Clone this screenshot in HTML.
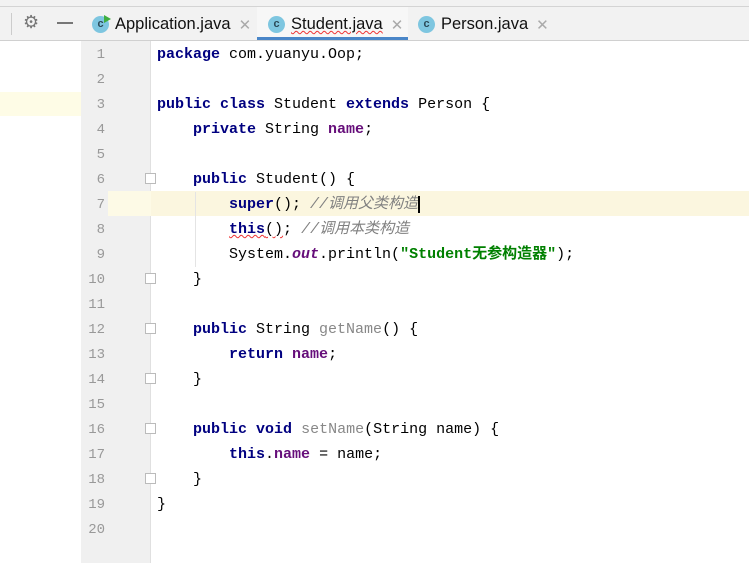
<!DOCTYPE html>
<html><head><meta charset="utf-8"><style>
body{margin:0;width:749px;height:563px;overflow:hidden;background:#fff;position:relative;font-family:"Liberation Sans","Noto Sans CJK SC",sans-serif}
.a{position:absolute}
.top{left:0;top:0;width:749px;height:6px;background:#f2f2f2;border-bottom:1px solid #d4d4d4}
.bar{left:0;top:7px;width:749px;height:33px;background:#f2f2f2;border-bottom:1px solid #d0d0d0}
.tab{top:8px;height:33px;font-size:16.5px;color:#111;display:flex;align-items:center}
.ic{display:inline-block;width:17px;height:17px;border-radius:50%;background:#7ec6e0;color:#2c4a58;font-size:11px;line-height:17px;text-align:center;margin-right:6px;font-weight:bold;flex:none}
.x{color:#aaa;font-size:15px;margin-left:8px}
.gut{left:81px;top:41px;width:69px;height:522px;background:#f0f0f0;border-right:1px solid #e0e0e0}
.ln{left:81px;width:24px;text-align:right;font:14px "Liberation Mono",monospace;color:#999;line-height:25px}
.code{left:157px;top:42px;font:15px "Liberation Mono","Noto Sans CJK SC",monospace;line-height:25px;color:#000;white-space:pre}
.k{color:#000080;font-weight:bold}
.f{color:#660e7a;font-weight:bold}
.c{color:#808080;font-style:italic}
.s{color:#008000;font-weight:bold}
.g{color:#888}
.fold{width:9px;height:9px;border:1px solid #bbb;background:#fff;left:145px}
</style></head><body>
<div class="a top"></div>
<div class="a bar"></div>
<div class="a" style="left:11px;top:13px;width:1px;height:22px;background:#ccc"></div>
<div class="a" style="left:23px;top:12px;font-size:18px;color:#777">⚙</div>
<div class="a" style="left:57px;top:22px;width:16px;height:2px;background:#777"></div>
<div class="a tab" style="left:92px"><span class="ic">c</span>Application.java<span class="x">✕</span></div>
<div class="a" style="left:104px;top:15px;width:0;height:0;border-left:7px solid #3fae3f;border-top:4px solid transparent;border-bottom:4px solid transparent"></div>
<div class="a" style="left:257px;top:7px;width:151px;height:33px;background:#f7f7f7"></div>
<div class="a tab" style="left:268px"><span class="ic">c</span><span style="text-decoration:underline wavy #e33;text-decoration-thickness:1px">Student.java</span><span class="x">✕</span></div>
<div class="a" style="left:257px;top:37px;width:151px;height:3px;background:#4a86c8"></div>
<div class="a tab" style="left:418px"><span class="ic">c</span>Person.java<span class="x">✕</span></div>
<div class="a" style="left:0;top:92px;width:81px;height:24px;background:#fefce6"></div>
<div class="a gut"></div>
<div class="a" style="left:108px;top:191px;width:641px;height:25px;background:#fdfae6"></div>
<div class="a" style="left:151px;top:191px;width:598px;height:25px;background:#fbf6df"></div>
<div class="a ln" style="top:43px">1<br>2<br>3<br>4<br>5<br>6<br>7<br>8<br>9<br>10<br>11<br>12<br>13<br>14<br>15<br>16<br>17<br>18<br>19<br>20</div>
<div class="a fold" style="top:173px"></div>
<div class="a fold" style="top:273px"></div>
<div class="a fold" style="top:323px"></div>
<div class="a fold" style="top:373px"></div>
<div class="a fold" style="top:423px"></div>
<div class="a fold" style="top:473px"></div>
<div class="a" style="left:195px;top:192px;width:1px;height:75px;background:#e4e4e4"></div>
<div class="a code"><span class="k">package</span> com.yuanyu.Oop;

<span class="k">public class</span> Student <span class="k">extends</span> Person {
    <span class="k">private</span> String <span class="f">name</span>;

    <span class="k">public</span> Student() {
        <span class="k">super</span>(); <span class="c">//调用父类构造</span><span style="border-left:2px solid #000"></span>
        <span class="k" style="text-decoration:underline wavy #e33;text-decoration-thickness:1px">this</span><span style="text-decoration:underline wavy #e33;text-decoration-thickness:1px">()</span>; <span class="c">//调用本类构造</span>
        System.<span class="f" style="font-style:italic">out</span>.println(<span class="s">"Student无参构造器"</span>);
    }

    <span class="k">public</span> String <span class="g">getName</span>() {
        <span class="k">return</span> <span class="f">name</span>;
    }

    <span class="k">public void</span> <span class="g">setName</span>(String name) {
        <span class="k">this</span>.<span class="f">name</span> = name;
    }
}
</div>
</body></html>
